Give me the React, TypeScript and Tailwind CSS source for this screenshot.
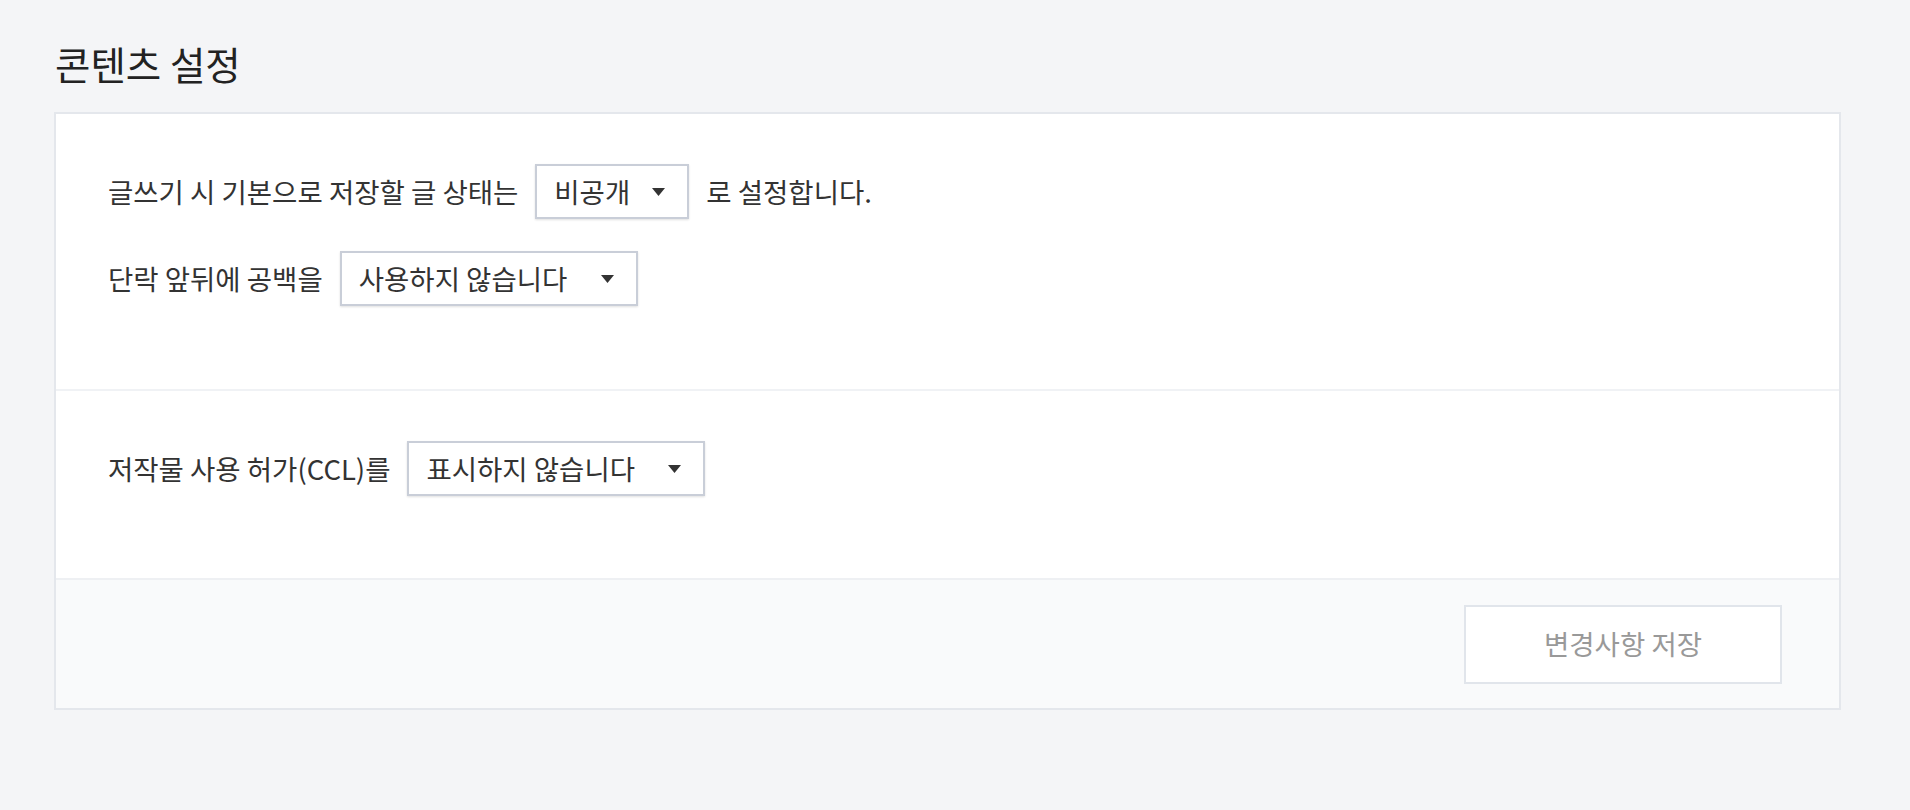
import React from 'react';

const font = { fontFamily: '"Noto Sans CJK KR", "Noto Sans", sans-serif' };

const Arrow = () => (
  <svg width="13" height="8" viewBox="0 0 13 8" className="shrink-0">
    <path d="M0 0 L13 0 L6.5 8 Z" fill="#333" />
  </svg>
);

const Select: React.FC<{ label: string; width: string }> = ({ label, width }) => (
  <div
    className={`${width} h-[55px] flex items-center justify-between pl-[17px] pr-[22px] bg-white border-2 border-[#c9ced8] shadow-[0_1px_2px_rgba(0,0,0,0.12)] text-[#333]`}
  >
    <span className="leading-none">{label}</span>
    <Arrow />
  </div>
);

export default function App() {
  return (
    <div className="min-h-[810px] bg-[#f4f5f7] text-[27.5px]" style={font}>
      <div className="w-[1787px] ml-[54px] pt-[37px]">
        <h1 className="text-[38.5px] leading-[52px] text-[#222] font-normal mb-[23px] pl-[1px]">콘텐츠 설정</h1>

        <div className="bg-white border-2 border-[#e4e7ec]">
          {/* 기본 글 상태 / 단락 공백 */}
          <div className="pt-[50px] pb-[83px] px-[52px] flex flex-col gap-[32px]">
            <div className="flex items-center gap-[17px] h-[55px] text-[#333]">
              <span>글쓰기 시 기본으로 저장할 글 상태는</span>
              <Select label="비공개" width="w-[154px]" />
              <span>로 설정합니다.</span>
            </div>
            <div className="flex items-center gap-[17px] h-[55px] text-[#333]">
              <span>단락 앞뒤에 공백을</span>
              <Select label="사용하지 않습니다" width="w-[298px]" />
            </div>
          </div>

          {/* CCL */}
          <div className="border-t-2 border-[#f0f2f5] pt-[50px] pb-[82px] px-[52px]">
            <div className="flex items-center gap-[17px] h-[55px] text-[#333]">
              <span>저작물 사용 허가(CCL)를</span>
              <Select label="표시하지 않습니다" width="w-[298px]" />
            </div>
          </div>

          {/* footer */}
          <div className="border-t-2 border-[#eef0f3] bg-[#f9fafb] h-[130px] flex items-center justify-end pr-[57px]">
            <button className="w-[318px] h-[79px] bg-white border-2 border-[#e1e5eb] text-[#999] text-[27.5px]">
              변경사항 저장
            </button>
          </div>
        </div>
      </div>
    </div>
  );
}
